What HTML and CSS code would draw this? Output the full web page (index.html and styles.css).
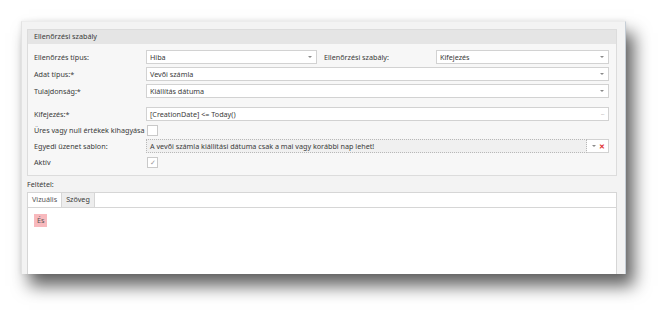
FILE: index.html
```html
<!DOCTYPE html>
<html lang="hu">
<head>
  <meta charset="UTF-8" />
  <title>Ellenőrzési szabály</title>
  <link rel="stylesheet" href="styles.css">
</head>
<body>
  <div class="window">
    <div class="group">
      <div class="group-title">Ellenőrzési szabály</div>
      <div class="group-body">
        <div class="row">
          <label class="lbl">Ellenőrzés típus:</label>
          <div class="field combo short"><span>Hiba</span><i class="arrow"></i></div>
          <label class="lbl2">Ellenőrzési szabály:</label>
          <div class="field combo grow"><span>Kifejezés</span><i class="arrow"></i></div>
        </div>
        <div class="row">
          <label class="lbl">Adat típus:*</label>
          <div class="field combo grow"><span>Vevői számla</span><i class="arrow"></i></div>
        </div>
        <div class="row">
          <label class="lbl">Tulajdonság:*</label>
          <div class="field combo grow"><span>Kiállítás dátuma</span><i class="arrow"></i></div>
        </div>
        <div class="row gap-top">
          <label class="lbl">Kifejezés:*</label>
          <div class="field grow"><span>[CreationDate] &lt;= Today()</span><i class="dots">···</i></div>
        </div>
        <div class="row small">
          <label class="lbl">Üres vagy null értékek kihagyása</label>
          <span class="check"></span>
        </div>
        <div class="row">
          <label class="lbl">Egyedi üzenet sablon:</label>
          <div class="field grow focused"><span>A vevői számla kiállítási dátuma csak a mai vagy korábbi nap lehet!</span></div>
          <div class="buttons"><i class="arrow"></i><i class="clear">✕</i></div>
        </div>
        <div class="row small">
          <label class="lbl">Aktív</label>
          <span class="check on">✓</span>
        </div>
      </div>
    </div>

    <div class="cond-label">Feltétel:</div>
    <div class="tabs">
      <div class="tab-strip">
        <div class="tab active">Vizuális</div>
        <div class="tab">Szöveg</div>
      </div>
      <div class="tab-body">
        <span class="tag">És</span>
      </div>
    </div>
  </div>
</body>
</html>
```

FILE: styles.css
```css
* {
  box-sizing: border-box;
}

html, body {
  min-height: 317px;
}

body {
  margin: 0;
  padding: 21px 0 43px 21px;
  background: #fff;
  font-family: 'Noto Sans', 'Open Sans', sans-serif;
  font-size: 7.2px;
  color: #3a3a3a;
}

.window {
  width: 605px;
  height: 253px;
  background: #f3f3f3;
  border-left: 1px solid #e2e2e2;
  border-top: 1px solid #ececec;
  border-right: 1px solid #c6ced6;
  padding: 7px 8px 0 5px;
  display: flex;
  flex-direction: column;
  box-shadow: 8px 12px 16px rgba(0, 0, 0, 0.62), 0 0 5px rgba(0, 0, 0, 0.08);
}

.group {
  border: 1px solid #dcdcdc;
  background: #f7f7f7;
  height: 147px;
  flex: none;
}

.group-title {
  height: 14px;
  line-height: 13px;
  background: #e5e5e5;
  padding-left: 6px;
}

.group-body {
  padding: 6px 7px 0 6px;
  display: flex;
  flex-direction: column;
  gap: 3px;
}

.row {
  display: flex;
  align-items: center;
  height: 14px;
}

.row.small {
  height: 12px;
}

.row.gap-top {
  margin-top: 6px;
}

.lbl {
  width: 112px;
  flex: none;
  white-space: nowrap;
}

.lbl2 {
  width: 119px;
  flex: none;
  padding-left: 7px;
}

.field {
  height: 14px;
  border: 1px solid #d2d2d2;
  background: #fff;
  display: flex;
  align-items: center;
  padding: 0 4px 0 3px;
  white-space: nowrap;
  overflow: hidden;
}

.field span {
  flex: 1;
}

.short {
  width: 171px;
  flex: none;
}

.grow {
  flex: 1;
}

.focused {
  background: #f0f0f0;
  border: 1px dotted #b8b8b8;
}

.arrow {
  width: 0;
  height: 0;
  border-left: 2px solid transparent;
  border-right: 2px solid transparent;
  border-top: 2px solid #8a8a8a;
}

.dots {
  font-style: normal;
  color: #8a8a8a;
  font-size: 6px;
  letter-spacing: -0.5px;
}

.buttons {
  width: 22px;
  height: 14px;
  flex: none;
  border: 1px solid #d2d2d2;
  border-left: none;
  background: #fff;
  display: flex;
  align-items: center;
  justify-content: space-around;
  padding: 0 1px 0 3px;
}

.clear {
  font-style: normal;
  color: #e03030;
  font-size: 7px;
  font-weight: bold;
}

.check {
  width: 11px;
  height: 11px;
  border: 1px solid #c9c9c9;
  background: #fff;
  margin-left: 1px;
  font-size: 7px;
  line-height: 9px;
  text-align: center;
  color: #9a9a9a;
}

.cond-label {
  height: 16px;
  line-height: 14px;
  padding-top: 1px;
}

.tabs {
  flex: 1;
  border: 1px solid #d6d6d6;
  border-bottom: none;
  background: #fff;
  display: flex;
  flex-direction: column;
}

.tab-strip {
  display: flex;
  height: 15px;
  border-bottom: 1px solid #d6d6d6;
}

.tab {
  height: 14px;
  line-height: 13px;
  padding: 0 4px;
  border-right: 1px solid #d6d6d6;
  background: #ededed;
}

.tab.active {
  background: #fff;
  color: #555;
}

.tab-body {
  flex: 1;
  padding: 6px 6px;
}

.tag {
  display: inline-block;
  height: 13px;
  line-height: 13px;
  padding: 0 3px;
  background: #f8b9bd;
  color: #555;
}
```
